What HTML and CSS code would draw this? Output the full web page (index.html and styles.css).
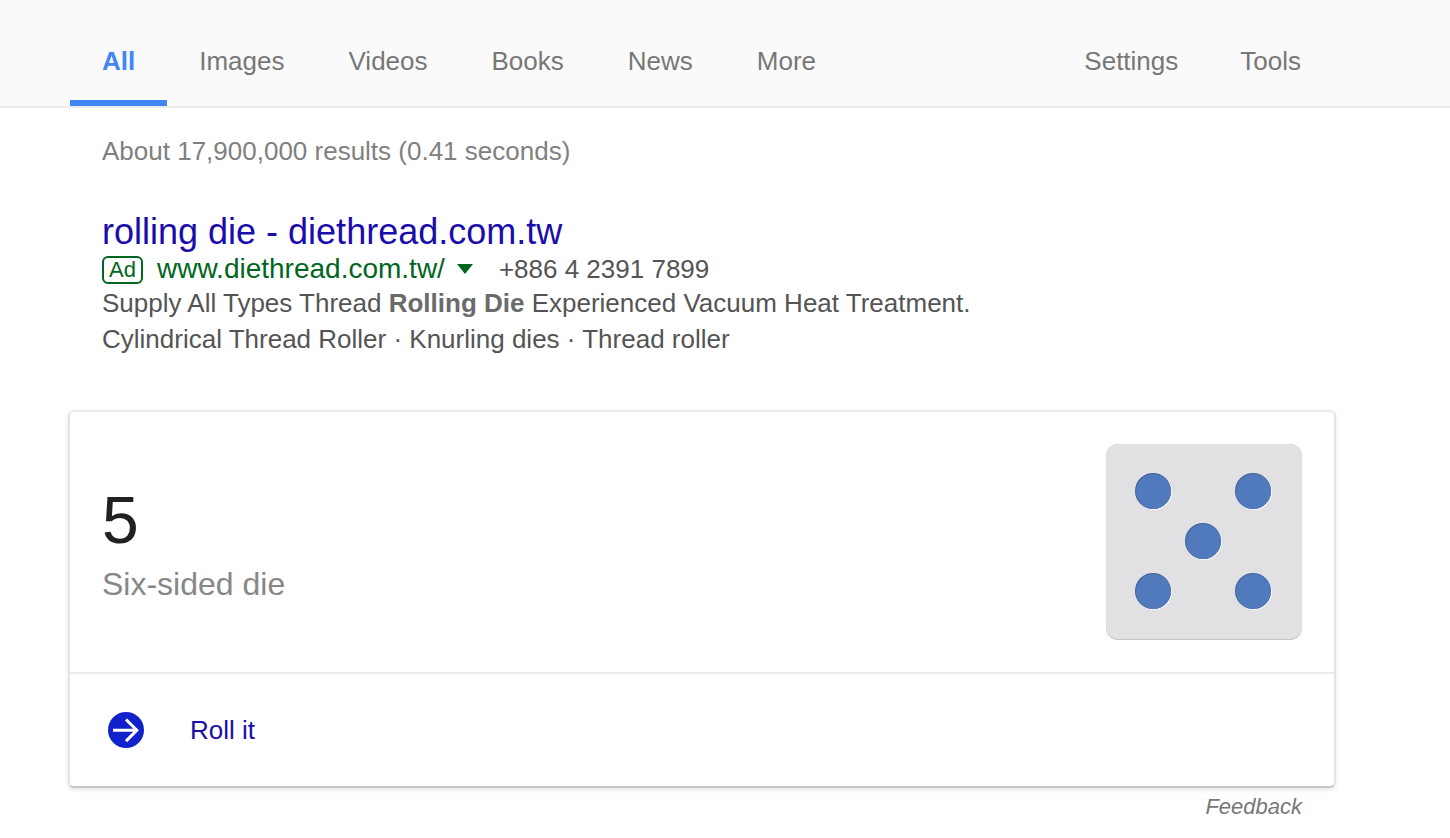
FILE: index.html
```html
<!DOCTYPE html>
<html lang="en">
<head>
<meta charset="utf-8">
<title>roll a die - Search</title>
<link rel="stylesheet" href="styles.css">
</head>
<body>
<nav class="tabs">
  <div class="tabs-inner">
    <a class="tab tab-active" href="#">All</a>
    <a class="tab" href="#">Images</a>
    <a class="tab" href="#">Videos</a>
    <a class="tab" href="#">Books</a>
    <a class="tab" href="#">News</a>
    <button class="tab" type="button">More</button>
    <div class="tools">
      <button class="tab" type="button">Settings</button>
      <button class="tab" type="button">Tools</button>
    </div>
  </div>
</nav>
<main class="results">
  <p class="stats">About 17,900,000 results (0.41 seconds)</p>
  <article class="ad">
    <h3 class="ad-title"><a href="#">rolling die - diethread.com.tw</a></h3>
    <div class="ad-meta">
      <span class="ad-badge">Ad</span>
      <cite class="ad-url">www.diethread.com.tw/</cite>
      <button class="ad-caret" type="button" aria-label="Why this ad?"><svg width="16" height="10" viewBox="0 0 16 10"><path d="M0 0h16L8 10z" fill="#006621"/></svg></button>
      <span class="ad-phone">+886 4 2391 7899</span>
    </div>
    <p class="ad-text">Supply All Types Thread <b>Rolling Die</b> Experienced Vacuum Heat Treatment.</p>
    <p class="ad-text">Cylindrical Thread Roller · Knurling dies · Thread roller</p>
  </article>
  <section class="card">
    <div class="card-main">
      <div>
        <div class="value">5</div>
        <div class="label">Six-sided die</div>
      </div>
      <svg class="die" width="196" height="196" viewBox="0 0 196 196" role="img" aria-label="5">
        <rect width="196" height="196" rx="12" fill="#c4c4c7"/>
        <rect width="196" height="195" rx="12" fill="#e1e1e3"/>
        <g fill="#f8f8fa"><circle cx="48" cy="48" r="18"/><circle cx="148" cy="48" r="18"/><circle cx="98" cy="98" r="18"/><circle cx="48" cy="148" r="18"/><circle cx="148" cy="148" r="18"/></g>
        <g fill="#426397"><circle cx="47" cy="47" r="18"/><circle cx="147" cy="47" r="18"/><circle cx="97" cy="97" r="18"/><circle cx="47" cy="147" r="18"/><circle cx="147" cy="147" r="18"/></g>
        <g fill="#507abc"><circle cx="47.500" cy="47.500" r="17.500"/><circle cx="147.500" cy="47.500" r="17.500"/><circle cx="97.500" cy="97.500" r="17.500"/><circle cx="47.500" cy="147.500" r="17.500"/><circle cx="147.500" cy="147.500" r="17.500"/></g>
      </svg>
    </div>
    <button class="roll" type="button">
      <svg width="36" height="36" viewBox="0 0 36 36"><circle cx="18" cy="18" r="18" fill="#1122cc"/><path d="M5 18.300h24M18 7.500L28.800 18.300 18 29.100" fill="none" stroke="#fff" stroke-width="3"/></svg>
      <span>Roll it</span>
    </button>
  </section>
  <a class="feedback" href="#">Feedback</a>
</main>
</body>
</html>
```

FILE: styles.css
```css
* { box-sizing: border-box; }
body {
  margin: 0;
  background: #fff;
  color: #545454;
  font-family: "Liberation Sans", Arial, sans-serif;
  font-size: 26px;
  line-height: 36px;
}
a { text-decoration: none; }
button {
  padding: 0;
  border: 0;
  background: none;
  color: inherit;
  font: inherit;
  cursor: pointer;
}
h3, p { margin: 0; font-weight: normal; }
.tabs {
  padding: 0 70px;
  background: #fafafa;
  border-bottom: 2px solid #ebebeb;
}
.tabs-inner {
  display: flex;
  max-width: 1264px;
}
.tab {
  padding: 43px 32px 21px;
  border-bottom: 6px solid transparent;
  color: #777;
}
.tab-active {
  border-bottom-color: #4285f4;
  color: #4285f4;
  font-weight: bold;
}
.tools { display: flex; margin: 0 2px 0 auto; }
.tools .tab { padding-left: 31px; padding-right: 31px; }
.results {
  max-width: 1268px;
  margin-left: 68px;
}
.stats { padding: 25px 34px 0; color: #808080; }
.ad { padding: 42px 34px 0; }
.ad-title { font-size: 36px; line-height: 42px; }
.ad-title a { color: #1a0dab; }
.ad-meta { display: flex; align-items: center; height: 32px; }
.ad-badge {
  width: 41px;
  margin: 2px 14px 0 0;
  border: 2px solid #006621;
  border-radius: 6px;
  color: #006621;
  font-size: 22px;
  line-height: 24px;
  text-align: center;
}
.ad-url { color: #006621; font-size: 28px; font-style: normal; }
.ad-caret { display: flex; margin: 0 26px 0 12px; }
.ad-text b { color: #6a6a6a; }
.card {
  margin-top: 53px;
  border: 2px solid #e4e4e4;
  border-top-color: #ebebeb;
  border-bottom-color: #c8c8c8;
  border-radius: 6px;
  box-shadow: 0 2px 4px rgba(0, 0, 0, 0.1);
}
.card-main {
  display: flex;
  justify-content: space-between;
  align-items: center;
  padding: 32px;
}
.value { color: #212121; font-size: 66px; line-height: 84px; }
.label { color: #878787; font-size: 32px; line-height: 44px; }
.roll {
  display: flex;
  align-items: center;
  gap: 46px;
  width: 100%;
  padding: 38px;
  border-top: 2px solid #ebebeb;
  color: #1a0dab;
}
.feedback {
  display: block;
  padding: 4px 34px 0;
  color: #777;
  font-size: 22px;
  font-style: italic;
  line-height: 30px;
  text-align: right;
}
```
